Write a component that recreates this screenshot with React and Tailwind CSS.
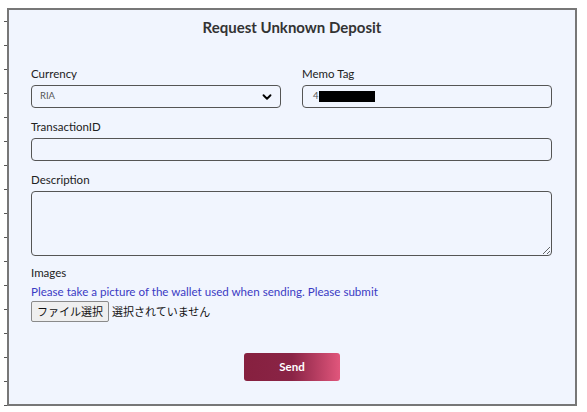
import React from "react";
import { ChevronDown } from "lucide-react";

const ticks = Array.from({ length: 17 }, (_, i) => i);

function Label({ children }) {
  return <p className="text-[11.5px] leading-[14px] text-[#222] mb-[4px]">{children}</p>;
}

export default function App() {
  return (
    <div className="w-[587px] h-[412px] bg-white flex font-['Lato','Noto_Sans',sans-serif]">
      {/* left ruler ticks */}
      <div className="w-[7px] flex flex-col items-end pt-[21px] gap-[23px]">
        {ticks.map((t) => (
          <div key={t} className="w-[3px] h-px bg-[#555]" />
        ))}
      </div>

      <div className="mt-[8px] w-[570px] h-[398px] border-2 border-[#777] bg-[#f1f5fe] pl-[22px] pr-[23px] pt-[7px]">
        <h1 className="text-center text-[15px] leading-[20px] font-bold text-[#333] pl-[1px]">
          Request Unknown Deposit
        </h1>

        <div className="mt-[30px] grid grid-cols-2 gap-x-[21px]">
          <div>
            <Label>Currency</Label>
            <div className="h-[23px] border border-[#555] rounded-[4px] flex items-center justify-between pl-[8px] pr-[6px]">
              <span className="text-[9.5px] text-[#555]">RIA</span>
              <ChevronDown size={14} strokeWidth={3.2} className="text-black" />
            </div>
          </div>
          <div>
            <Label>Memo Tag</Label>
            <div className="h-[23px] border border-[#555] rounded-[4px] flex items-center pl-[10px]">
              <span className="text-[9.5px] text-[#555]">4</span>
              <span className="w-[56px] h-[11px] bg-black" />
            </div>
          </div>
        </div>

        <div className="mt-[12px]">
          <Label>TransactionID</Label>
          <div className="h-[23px] border border-[#555] rounded-[4px]" />
        </div>

        <div className="mt-[12px]">
          <Label>Description</Label>
          <textarea className="block w-full h-[65px] border border-[#555] rounded-[4px] bg-transparent resize-y outline-none" />
        </div>

        <div className="mt-[10px]">
          <p className="text-[11.5px] leading-[14px] text-[#222]">Images</p>
          <p className="mt-[5px] text-[11.6px] leading-[14px] text-[#3b3bc4]">
            Please take a picture of the wallet used when sending. Please submit
          </p>
          <div className="mt-[2px] flex items-center font-['Noto_Sans_CJK_JP',sans-serif] text-[11px] text-[#111]">
            <span className="h-[21px] px-[5px] flex items-center bg-[#efefef] border border-[#8a8a8a] rounded-[2px]">
              ファイル選択
            </span>
            <span className="ml-[3px]">選択されていません</span>
          </div>
        </div>

        <div className="mt-[31px] flex justify-center pl-[1px]">
          <button className="w-[96px] h-[28px] rounded-[3px] bg-linear-to-r from-[#86203f] via-[#8a2446] to-[#e1567c] text-white text-[11.5px] font-bold">
            Send
          </button>
        </div>
      </div>
    </div>
  );
}
